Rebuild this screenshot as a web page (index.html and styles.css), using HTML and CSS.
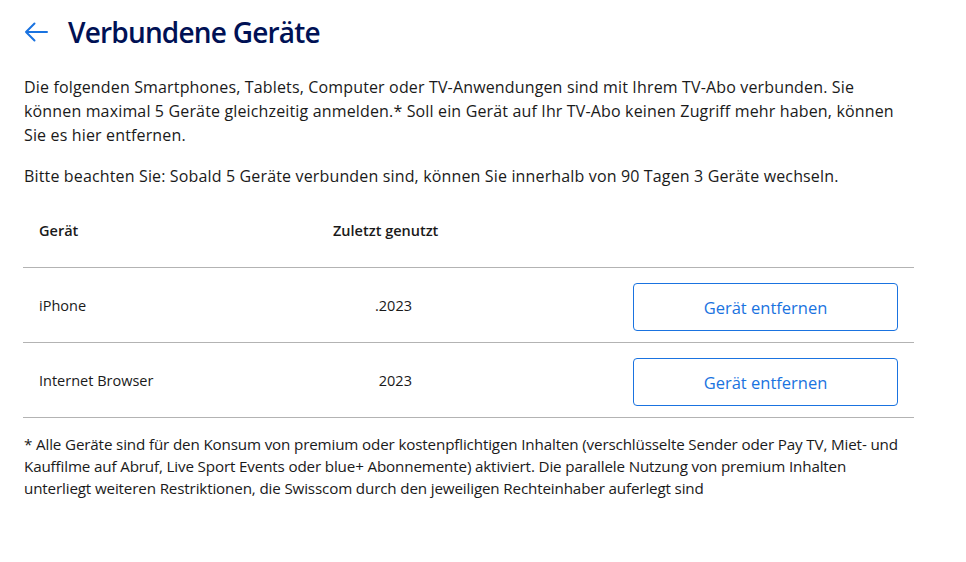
FILE: index.html
```html
<!DOCTYPE html>
<html lang="de">
<head>
<meta charset="utf-8">
<title>Verbundene Geräte</title>
<link rel="stylesheet" href="styles.css">
</head>
<body>
<main class="page">
  <header class="head">
    <svg class="back" width="24" height="20" viewBox="0 0 24 20" aria-hidden="true">
      <path d="M23 10H2M10.5 1.5L2 10l8.5 8.5" fill="none" stroke="#1a73e0" stroke-width="2" stroke-linecap="round" stroke-linejoin="round"/>
    </svg>
    <h1 class="title">Verbundene Geräte</h1>
  </header>
  <p class="intro">Die folgenden Smartphones, Tablets, Computer oder TV-Anwendungen sind mit Ihrem TV-Abo verbunden. Sie können maximal 5 Geräte gleichzeitig anmelden.* Soll ein Gerät auf Ihr TV-Abo keinen Zugriff mehr haben, können Sie es hier entfernen.</p>
  <p class="note">Bitte beachten Sie: Sobald 5 Geräte verbunden sind, können Sie innerhalb von 90 Tagen 3 Geräte wechseln.</p>
  <div class="table">
    <div class="row row-head">
      <div class="c1">Gerät</div>
      <div class="c2">Zuletzt genutzt</div>
      <div class="c3"></div>
    </div>
    <div class="row">
      <div class="c1">iPhone</div>
      <div class="c2"><span class="date"><span class="hidden">12.04</span>.2023</span></div>
      <div class="c3"><button class="btn">Gerät entfernen</button></div>
    </div>
    <div class="row">
      <div class="c1">Internet Browser</div>
      <div class="c2"><span class="date"><span class="hidden">18.05.</span>2023</span></div>
      <div class="c3"><button class="btn">Gerät entfernen</button></div>
    </div>
  </div>
  <p class="foot">* Alle Geräte sind für den Konsum von premium oder kostenpflichtigen Inhalten (verschlüsselte Sender oder Pay TV, Miet- und Kauffilme auf Abruf, Live Sport Events oder blue+ Abonnemente) aktiviert. Die parallele Nutzung von premium Inhalten unterliegt weiteren Restriktionen, die Swisscom durch den jeweiligen Rechteinhaber auferlegt sind</p>
</main>
</body>
</html>
```
FILE: styles.css
```css
* { box-sizing: border-box; }
html, body { margin: 0; padding: 0; background: #fff; }
body {
  font-family: "Open Sans", "Noto Sans", sans-serif;
  color: #1a1a1a;
  font-size: 16px;
}
.page {
  width: 914px;
  padding: 14px 0 0 24px;
}
.head {
  display: flex;
  align-items: center;
  gap: 20px;
  height: 36px;
}
.back { display: block; }
.title {
  margin: 0;
  font-size: 28px;
  font-weight: 600;
  color: #001155;
  letter-spacing: -0.8px;
}
.intro {
  margin: 25px 0 0;
  line-height: 24px;
  letter-spacing: 0.15px;
}
.note {
  margin: 17px 0 0;
  line-height: 24px;
  letter-spacing: 0.15px;
}
.table {
  margin-top: 33px;
  margin-left: -1px;
}
.row {
  display: flex;
  align-items: center;
  height: 75px;
  border-bottom: 1px solid #b3b3b3;
}
.row-head {
  height: 47px;
  font-weight: 600;
  font-size: 14.5px;
  line-height: 20px;
  align-items: flex-start;
}
.c1 { width: 310px; padding-left: 16px; }
.c2 { width: 300px; }
.c3 { flex: 1; }
.row .c1, .row .c2 { font-size: 14.5px; }
.date { margin-left: 5px; }
.hidden { visibility: hidden; }
.btn {
  display: block;
  width: 265px;
  height: 48px;
  margin-top: 4px;
  background: #fff;
  border: 1px solid #1a73e0;
  border-radius: 4px;
  color: #1a73e0;
  font-family: inherit;
  font-size: 16.5px;
}
.foot {
  margin: 15px 0 0;
  font-size: 15.2px;
  line-height: 22px;
  letter-spacing: -0.15px;
}
```
